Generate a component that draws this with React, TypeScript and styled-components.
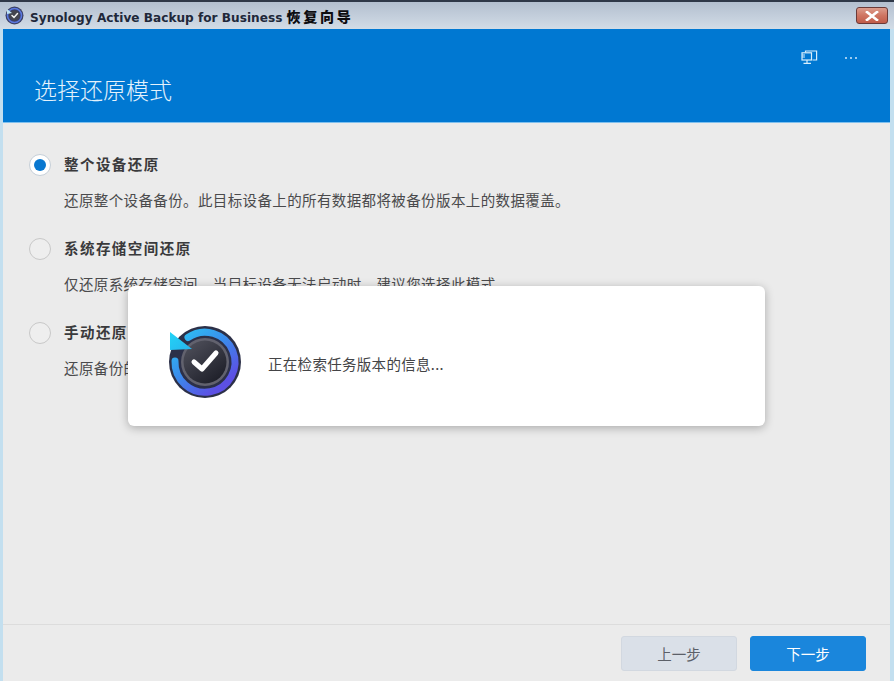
import React from "react";
import styled, { createGlobalStyle } from "styled-components";

const cjk = `"Noto Sans CJK SC", "Liberation Sans", sans-serif`;

const GlobalStyle = createGlobalStyle`
  html, body {
    margin: 0;
    padding: 0;
    background: #ebebeb;
  }
  * {
    box-sizing: border-box;
  }
`;

const options = [
  {
    title: "整个设备还原",
    desc: "还原整个设备备份。此目标设备上的所有数据都将被备份版本上的数据覆盖。",
    checked: true,
  },
  {
    title: "系统存储空间还原",
    desc: "仅还原系统存储空间。当目标设备无法启动时，建议您选择此模式。",
    checked: false,
  },
  {
    title: "手动还原",
    desc: "还原备份的",
    checked: false,
  },
];

const BadgeIcon = () => (
  <svg width="72" height="72" viewBox="9 9 72 72" style={{ overflow: "visible" }}>
    <defs>
      <linearGradient id="ring" x1="0.1" y1="0.1" x2="0.75" y2="0.9">
        <stop offset="0" stopColor="#2fb8f2" />
        <stop offset="0.45" stopColor="#3a8cec" />
        <stop offset="1" stopColor="#5c50e4" />
      </linearGradient>
      <linearGradient id="face" x1="0.2" y1="0.1" x2="0.8" y2="0.9">
        <stop offset="0" stopColor="#4a4b56" />
        <stop offset="1" stopColor="#20212b" />
      </linearGradient>
      <linearGradient id="arrow" x1="0" y1="0" x2="1" y2="1">
        <stop offset="0" stopColor="#22d4f6" />
        <stop offset="1" stopColor="#28b4ee" />
      </linearGradient>
    </defs>
    <circle cx="45" cy="45" r="36" fill="#2c3048" />
    <path
      d="M15 44 A30 30 0 1 0 28 20.5"
      fill="none"
      stroke="url(#ring)"
      strokeWidth="7"
      strokeLinecap="round"
    />
    <circle cx="45" cy="45" r="24" fill="#62626e" />
    <circle cx="45" cy="45" r="21.5" fill="url(#face)" />
    <path d="M10 15 L10 33 L32 32 Z" fill="url(#arrow)" />
    <path
      d="M34 45 L42 52 L56 36"
      fill="none"
      stroke="#fff"
      strokeWidth="5"
      strokeLinecap="round"
      strokeLinejoin="round"
    />
  </svg>
);

const AppIcon = () => (
  <svg width="19" height="19" viewBox="0 0 19 19">
    <circle cx="9.5" cy="9.5" r="9" fill="#3a4064" />
    <circle cx="9.5" cy="9.5" r="7" fill="none" stroke="#5a78e0" strokeWidth="1.6" />
    <circle cx="9.5" cy="9.5" r="5" fill="#44454f" />
    <path d="M2 3 L2 8 L7 7 Z" fill="#bfe4f4" />
    <path
      d="M7 9.5 L9 11.5 L12.5 7.5"
      fill="none"
      stroke="#f2f2f2"
      strokeWidth="1.5"
      strokeLinecap="round"
    />
  </svg>
);

const MonitorIcon = () => (
  <svg width="17" height="15" viewBox="0 0 17 15" fill="none" stroke="#d8eefc" strokeWidth="1.2">
    <path d="M4.5 2.5 V1 H15.6 V10 H11.5" />
    <rect x="1" y="2.8" width="9.5" height="7.2" />
    <path d="M1 5 H4 M1 7 H4" strokeWidth="1" />
    <path d="M6 10 V13 M2.5 13.4 H10" />
  </svg>
);

const App = () => (
  <>
    <GlobalStyle />
    <Window>
      <TitleBar>
        <AppIcon />
        <WindowTitle>
          Synology Active Backup for Business <CjkTitle>恢复向导</CjkTitle>
        </WindowTitle>
        <CloseButton>
          <svg width="14" height="10" viewBox="0 0 14 10">
            <path
              d="M2 1 L12 9 M12 1 L2 9"
              stroke="#fff"
              strokeWidth="2.6"
              strokeLinecap="square"
            />
          </svg>
        </CloseButton>
      </TitleBar>
      <Frame>
        <Header>
          <HeaderTools>
            <MonitorIcon />
            <Dots>
              <Dot />
              <Dot />
              <Dot />
            </Dots>
          </HeaderTools>
          <Heading>选择还原模式</Heading>
        </Header>
        <Content>
          {options.map((o) => (
            <Option key={o.title}>
              <OptionRow>
                <Radio $checked={o.checked} />
                <OptionTitle>{o.title}</OptionTitle>
              </OptionRow>
              <OptionDesc>{o.desc}</OptionDesc>
            </Option>
          ))}
        </Content>
        <Footer>
          <FooterButton>上一步</FooterButton>
          <FooterButton $primary>下一步</FooterButton>
        </Footer>
      </Frame>
      <Dialog>
        <BadgeIcon />
        <DialogText>正在检索任务版本的信息...</DialogText>
      </Dialog>
    </Window>
  </>
);

export default App;

const Window = styled.div`
  position: relative;
  width: 894px;
  height: 681px;
  display: flex;
  flex-direction: column;
  overflow: hidden;
  font-family: ${cjk};
  background: #c3dfef;
`;

const TitleBar = styled.div`
  height: 29px;
  flex: none;
  display: flex;
  align-items: center;
  padding: 0 6px 0 5px;
  border-top: 2px solid #2f3848;
  background: linear-gradient(180deg, #b3bfcf 0%, #c4cfdc 55%, #d2dce6 100%);
`;

const WindowTitle = styled.div`
  margin-left: 6px;
  font-family: "DejaVu Sans", "Noto Sans CJK SC", sans-serif;
  font-size: 12.1px;
  font-weight: 700;
  letter-spacing: 0.02px;
  color: #20283a;
  white-space: nowrap;
`;

const CjkTitle = styled.span`
  font-family: ${cjk};
  font-size: 14px;
  font-weight: 900;
  letter-spacing: 2.7px;
  color: #0c0c10;
`;

const CloseButton = styled.div`
  margin-left: auto;
  width: 32px;
  height: 17px;
  display: flex;
  align-items: center;
  justify-content: center;
  border: 1px solid #6b3a38;
  border-radius: 3px;
  background: linear-gradient(180deg, #dc9c8c 0%, #cf7562 50%, #c05c4a 100%);
`;

const Frame = styled.div`
  flex: 1;
  min-height: 0;
  display: flex;
  flex-direction: column;
  margin: 0 4px 0 3px;
  background: #ebebeb;
`;

const Header = styled.div`
  height: 94px;
  flex: none;
  display: flex;
  flex-direction: column;
  justify-content: space-between;
  padding: 21px 0 18px 31px;
  background: #0078d2;
  border-bottom: 1px solid #7fc0ee;
`;

const HeaderTools = styled.div`
  display: flex;
  align-items: center;
  justify-content: flex-end;
  gap: 27px;
  padding-right: 33px;
`;

const Dots = styled.div`
  display: flex;
  gap: 3px;
`;

const Dot = styled.span`
  width: 2px;
  height: 2px;
  border-radius: 50%;
  background: #cfe9fb;
`;

const Heading = styled.h1`
  margin: 0;
  font-size: 23px;
  line-height: 30px;
  font-weight: 300;
  color: #e4f2fc;
`;

const Content = styled.div`
  flex: 1;
  display: flex;
  flex-direction: column;
  gap: 28px;
  padding: 31px 0 0 26px;
`;

const Option = styled.div`
  display: flex;
  flex-direction: column;
  gap: 14px;
`;

const OptionRow = styled.div`
  display: flex;
  align-items: center;
  gap: 13px;
  height: 22px;
`;

const Radio = styled.span<{ $checked: boolean }>`
  width: 22px;
  height: 22px;
  flex: none;
  display: flex;
  align-items: center;
  justify-content: center;
  border-radius: 50%;
  border: 1px solid ${(p) => (p.$checked ? "#c6cfd8" : "#c8c8c8")};
  background: ${(p) => (p.$checked ? "#fff" : "#eeeeee")};

  &::after {
    content: "";
    display: ${(p) => (p.$checked ? "block" : "none")};
    width: 12px;
    height: 12px;
    border-radius: 50%;
    background: #0a78d0;
  }
`;

const OptionTitle = styled.div`
  font-size: 14.5px;
  line-height: 20px;
  margin-bottom: 2px;
  font-weight: 700;
  letter-spacing: 1.45px;
  color: #3a3a3c;
`;

const OptionDesc = styled.div`
  padding-left: 35px;
  font-size: 14.5px;
  line-height: 20px;
  letter-spacing: 0.38px;
  color: #4a4a4c;
`;

const Footer = styled.div`
  height: 57px;
  flex: none;
  display: flex;
  align-items: flex-start;
  justify-content: flex-end;
  gap: 13px;
  padding: 11px 24px 0 0;
  border-top: 1px solid #dcdcdc;
`;

const FooterButton = styled.div<{ $primary?: boolean }>`
  width: 116px;
  height: 35px;
  display: flex;
  align-items: center;
  justify-content: center;
  border-radius: 3px;
  font-size: 14.5px;
  background: ${(p) => (p.$primary ? "#1a86dc" : "#dae0e8")};
  color: ${(p) => (p.$primary ? "#ffffff" : "#5c6068")};
  border: 1px solid ${(p) => (p.$primary ? "#1a86dc" : "#d2d8e0")};
`;

const Dialog = styled.div`
  position: absolute;
  left: 128px;
  top: 286px;
  width: 637px;
  height: 140px;
  display: flex;
  align-items: center;
  gap: 27px;
  padding: 12px 0 0 41px;
  border-radius: 6px;
  background: #ffffff;
  box-shadow: 0 2px 10px rgba(0, 0, 0, 0.28);
`;

const DialogText = styled.div`
  padding-top: 4px;
  font-size: 14.5px;
  line-height: 20px;
  letter-spacing: 0.3px;
  color: #444446;
`;
